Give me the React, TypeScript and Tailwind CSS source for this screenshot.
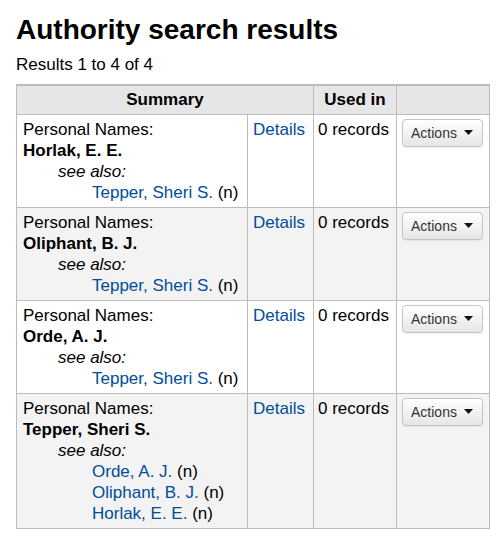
import React from "react";

type Row = {
  name: string;
  seeAlso: string[];
};

const rows: Row[] = [
  { name: "Horlak, E. E.", seeAlso: ["Tepper, Sheri S."] },
  { name: "Oliphant, B. J.", seeAlso: ["Tepper, Sheri S."] },
  { name: "Orde, A. J.", seeAlso: ["Tepper, Sheri S."] },
  { name: "Tepper, Sheri S.", seeAlso: ["Orde, A. J.", "Oliphant, B. J.", "Horlak, E. E."] },
];

function ActionsButton() {
  return (
    <button className="flex h-[28px] w-[81px] items-center gap-[7px] rounded-[4px] border border-[#c4c4c4] bg-gradient-to-b from-white to-[#e6e6e6] pl-[8px] text-[14px] leading-none text-[#333] shadow-[0_1px_1px_rgba(0,0,0,0.06)]">
      Actions
      <svg width="9" height="5" viewBox="0 0 9 5">
        <path d="M0 0h9L4.5 5z" fill="#111" />
      </svg>
    </button>
  );
}

export default function App() {
  return (
    <div className="min-h-[541px] bg-white px-4 pt-[13px] font-['Liberation_Sans',Arial,sans-serif] text-black">
      <h1 className="text-[28px] font-bold leading-[34px]">Authority search results</h1>
      <p className="mt-[7px] text-[17px] leading-[21px]">Results 1 to 4 of 4</p>

      <table className="mt-[9px] w-[473px] table-fixed border-collapse border border-t-2 border-[#bcbcbc] text-[17px] leading-[21px]">
        <colgroup>
          <col className="w-[231px]" />
          <col className="w-[66px]" />
          <col className="w-[83px]" />
          <col className="w-[93px]" />
        </colgroup>
        <thead>
          <tr className="h-[29px] bg-[#e6e6e6]">
            <th colSpan={2} className="border border-[#bcbcbc] px-[5px] py-[3px] text-center font-bold">
              Summary
            </th>
            <th className="border border-[#bcbcbc] px-[5px] py-[3px] text-center font-bold">Used in</th>
            <th className="border border-[#bcbcbc]"></th>
          </tr>
        </thead>
        <tbody>
          {rows.map((r, i) => (
            <tr key={r.name} className={i % 2 === 1 ? "bg-[#f3f3f3]" : "bg-white"}>
              <td className="border border-[#bcbcbc] pl-[6px] pr-[5px] py-[4px] align-top">
                <div>Personal Names:</div>
                <div className="font-bold">{r.name}</div>
                <div className="pl-[35px] italic">see also:</div>
                {r.seeAlso.map((s) => (
                  <div key={s} className="pl-[69px]">
                    <a className="text-[#004d99]">{s}</a> (n)
                  </div>
                ))}
              </td>
              <td className="border border-[#bcbcbc] px-[5px] py-[4px] align-top">
                <a className="text-[#004d99]">Details</a>
              </td>
              <td className="border border-[#bcbcbc] px-[4px] py-[4px] align-top">0 records</td>
              <td className="border border-[#bcbcbc] px-[5px] py-[4px] align-top">
                <ActionsButton />
              </td>
            </tr>
          ))}
        </tbody>
      </table>
    </div>
  );
}
